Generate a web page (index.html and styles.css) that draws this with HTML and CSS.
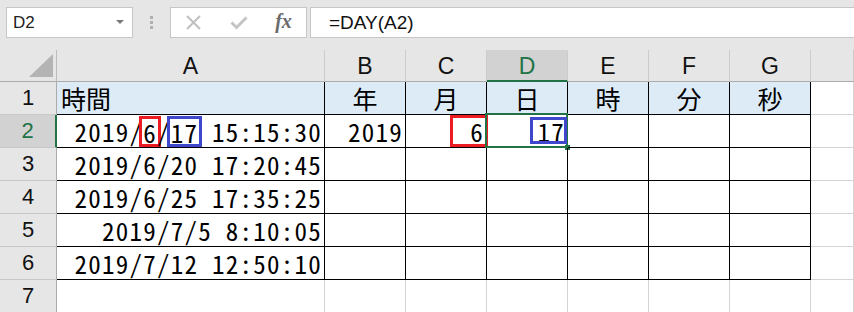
FILE: index.html
```html
<!DOCTYPE html>
<html lang="ja">
<head>
    <meta charset="UTF-8">
    <title>DAY関数</title>
    <link rel="stylesheet" href="styles.css">
</head>
<body>
    <div class="bar">
        <div class="namebox"><span>D2</span><i class="drop"></i></div>
        <div class="grip"><i></i><i></i><i></i></div>
        <div class="tools">
            <span class="tool">
                <svg width="15" height="15" viewBox="0 0 15 15"><path d="M1 1L14 14M14 1L1 14" stroke="#c0c0c0" stroke-width="2" fill="none"/></svg>
            </span>
            <span class="tool">
                <svg width="18" height="14" viewBox="0 0 18 14"><path d="M1.5 6.5L6.5 11.5L16.5 1.5" stroke="#c4c4c4" stroke-width="3" fill="none"/></svg>
            </span>
            <span class="tool fx">fx</span>
        </div>
        <div class="formula">=DAY(A2)</div>
    </div>

    <div class="sheet">
        <!-- 列見出し -->
        <div class="corner"><i></i></div>
        <div class="ch">A</div>
        <div class="ch">B</div>
        <div class="ch">C</div>
        <div class="ch on">D</div>
        <div class="ch">E</div>
        <div class="ch">F</div>
        <div class="ch">G</div>
        <div class="ch"></div>

        <!-- 1 -->
        <div class="rh">1</div>
        <div class="t hd left">時間</div>
        <div class="t hd">年</div>
        <div class="t hd">月</div>
        <div class="t hd">日</div>
        <div class="t hd">時</div>
        <div class="t hd">分</div>
        <div class="t hd">秒</div>
        <div class="c"></div>

        <!-- 2 -->
        <div class="rh on">2</div>
        <div class="t num">2019/<span class="mark red">6</span>/<span class="mark blue">17</span> 15:15:30</div>
        <div class="t num">2019</div>
        <div class="t num">6<i class="box red c2"></i></div>
        <div class="t num">17<i class="active"></i><i class="box blue d2"></i></div>
        <div class="t"></div>
        <div class="t"></div>
        <div class="t"></div>
        <div class="c"></div>

        <!-- 3 -->
        <div class="rh">3</div>
        <div class="t num">2019/6/20 17:20:45</div>
        <div class="t"></div><div class="t"></div><div class="t"></div>
        <div class="t"></div><div class="t"></div><div class="t"></div>
        <div class="c"></div>

        <!-- 4 -->
        <div class="rh">4</div>
        <div class="t num">2019/6/25 17:35:25</div>
        <div class="t"></div><div class="t"></div><div class="t"></div>
        <div class="t"></div><div class="t"></div><div class="t"></div>
        <div class="c"></div>

        <!-- 5 -->
        <div class="rh">5</div>
        <div class="t num">2019/7/5 8:10:05</div>
        <div class="t"></div><div class="t"></div><div class="t"></div>
        <div class="t"></div><div class="t"></div><div class="t"></div>
        <div class="c"></div>

        <!-- 6 -->
        <div class="rh">6</div>
        <div class="t num">2019/7/12 12:50:10</div>
        <div class="t"></div><div class="t"></div><div class="t"></div>
        <div class="t"></div><div class="t"></div><div class="t"></div>
        <div class="c"></div>

        <!-- 7 -->
        <div class="rh">7</div>
        <div class="c"></div><div class="c"></div><div class="c"></div><div class="c"></div>
        <div class="c"></div><div class="c"></div><div class="c"></div><div class="c"></div>
    </div>
</body>
</html>
```

FILE: styles.css
```css
*{
    margin: 0;
    padding: 0;
    box-sizing: border-box;
}
body{
    width: 854px;
    height: 312px;
    overflow: hidden;
    background: #fff;
    font-family: "Liberation Sans", Arial, sans-serif;
}

/* 数式バー */
.bar{
    display: flex;
    height: 50px;
    padding: 7px 0 0 6px;
    background: #e6e6e6;
}
.namebox{
    display: flex;
    align-items: center;
    width: 127px;
    height: 31px;
    padding-left: 6px;
    background: #fff;
    border: 1px solid #c6c6c6;
    font-size: 17px;
    color: #222;
}
.namebox span{
    flex: 1;
}
.namebox .drop{
    width: 0;
    height: 0;
    margin: 0 8px 2px 0;
    border-left: 4px solid transparent;
    border-right: 4px solid transparent;
    border-top: 4px solid #7a7a7a;
}
.grip{
    display: flex;
    flex-direction: column;
    align-items: center;
    gap: 2px;
    width: 37px;
    padding-top: 9px;
}
.grip i{
    width: 3px;
    height: 3px;
    background: #b0b0b0;
}
.tools{
    display: flex;
    align-items: center;
    width: 137px;
    height: 31px;
    background: #fff;
    border: 1px solid #c6c6c6;
}
.tool{
    display: flex;
    justify-content: center;
    align-items: center;
    width: 45px;
}
.tool.fx{
    font-family: "Liberation Serif", "Times New Roman", serif;
    font-style: italic;
    font-weight: bold;
    font-size: 20px;
    color: #6a6a6a;
    padding-bottom: 2px;
}
.formula{
    flex: 1;
    height: 31px;
    margin-left: 3px;
    padding-left: 18px;
    background: #fff;
    border: 1px solid #c6c6c6;
    border-right: none;
    font-size: 19px;
    line-height: 29px;
    color: #111;
}

/* シート */
.sheet{
    display: grid;
    grid-template-columns: 57px 268px repeat(6, 81px) 1fr;
    grid-template-rows: 32px repeat(7, 33px);
}
.sheet > div{
    border-right: 1px solid #d4d4d4;
    border-bottom: 1px solid #d4d4d4;
}
.corner{
    display: flex;
    justify-content: flex-end;
    align-items: flex-end;
    padding: 0 3px 4px 0;
    background: #e6e6e6;
}
.sheet .corner{
    border-right-color: #bcbcbc;
    border-bottom-color: #ababab;
}
.corner i{
    width: 24px;
    height: 23px;
    background: #b4b4b4;
    clip-path: polygon(100% 0, 100% 100%, 0 100%);
}
.sheet .ch{
    display: flex;
    justify-content: center;
    align-items: center;
    padding-top: 2px;
    background: #e6e6e6;
    border-right-color: #cbcbcb;
    border-bottom-color: #ababab;
    font-size: 23px;
    color: #111;
}
.sheet .ch.on{
    background: #d2d2d2;
    border-bottom: 2px solid #217346;
    color: #217346;
}
.sheet .rh{
    display: flex;
    justify-content: center;
    align-items: center;
    background: #e6e6e6;
    border-right-color: #ababab;
    border-bottom-color: #c8c8c8;
    font-size: 22px;
    color: #111;
}
.sheet .rh.on{
    background: #d2d2d2;
    border-right: 2px solid #217346;
    color: #217346;
}

/* 表のセル */
.sheet .t{
    position: relative;
    display: flex;
    align-items: center;
    justify-content: center;
    border-color: #000;
    font-family: "Noto Sans CJK JP", sans-serif;
    font-size: 25px;
    color: #000;
}
.t.hd{
    background: #ddebf7;
}
.t.left{
    justify-content: flex-start;
    padding-left: 4px;
}
.t.num{
    justify-content: flex-end;
    padding-right: 2px;
    font-feature-settings: "hwid" 1;
    letter-spacing: 1.25px;
    white-space: pre;
}

/* 囲み */
.mark{
    display: inline-block;
    line-height: 21px;
    padding-top: 2px;
}
.mark.red{
    outline: 3px solid #ec1c24;
    outline-offset: 1px;
}
.mark.blue{
    outline: 3px solid #3f48cc;
    outline-offset: 1px;
}
.box{
    position: absolute;
    border: 3px solid;
}
.box.red{
    border-color: #ec1c24;
}
.box.blue{
    border-color: #3f48cc;
}
.box.c2{
    top: 0;
    bottom: 0;
    left: 44px;
    right: -2px;
}
.box.d2{
    top: 2px;
    bottom: 3px;
    left: 43px;
    right: 0;
}
.active{
    position: absolute;
    top: -2px;
    left: -2px;
    right: -1px;
    bottom: -1px;
    border: 2px solid #217346;
}
.active::after{
    content: "";
    position: absolute;
    right: -4px;
    bottom: -4px;
    width: 5px;
    height: 5px;
    background: #217346;
}
```
